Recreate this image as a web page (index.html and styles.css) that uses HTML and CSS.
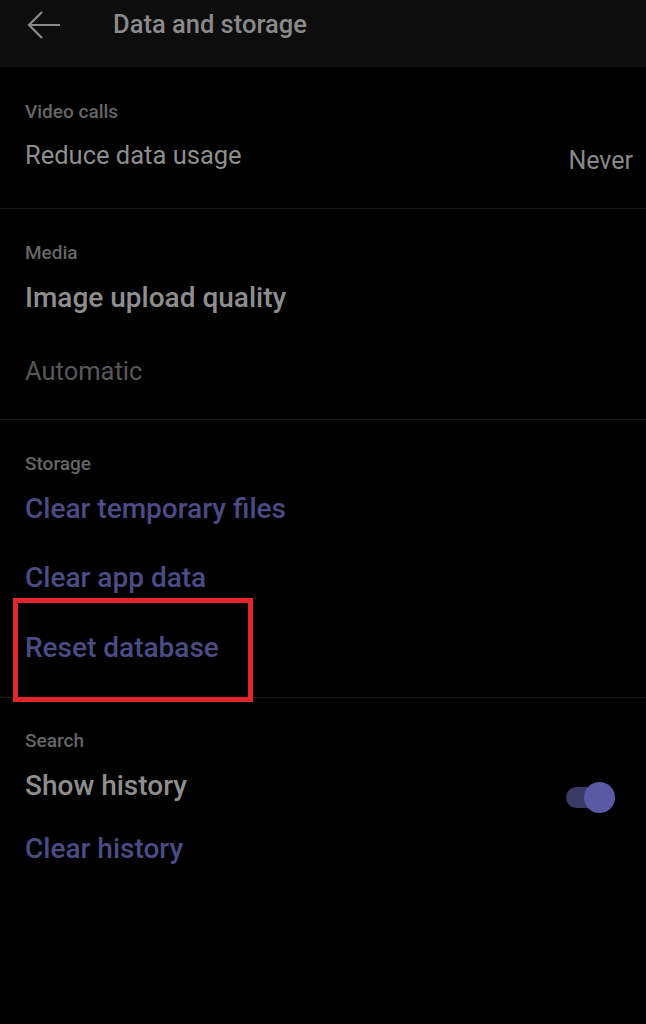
FILE: index.html
```html
<!DOCTYPE html>
<html lang="en">
<head>
  <meta charset="UTF-8" />
  <meta name="viewport" content="width=device-width, initial-scale=1.0" />
  <title>Data and storage</title>
  <link rel="stylesheet" href="styles.css">
</head>
<body>
  <header class="topbar">
    <svg class="back" width="34" height="30" viewBox="0 0 34 30">
      <path d="M33 15H2M15 2L2 15l13 13" fill="none" stroke="#8a8a8a" stroke-width="2.2"/>
    </svg>
    <h1>Data and storage</h1>
  </header>

  <section class="group video">
    <div class="label">Video calls</div>
    <div class="row">
      <span class="item">Reduce data usage</span>
      <span class="value">Never</span>
    </div>
  </section>

  <section class="group media">
    <div class="label">Media</div>
    <div class="item strong">Image upload quality</div>
    <div class="item muted">Automatic</div>
  </section>

  <section class="group storage">
    <div class="label">Storage</div>
    <div class="item link">Clear temporary files</div>
    <div class="item link">Clear app data</div>
    <div class="item link"><span class="highlight">Reset database</span></div>
  </section>

  <section class="group search">
    <div class="label">Search</div>
    <div class="row">
      <span class="item strong">Show history</span>
      <span class="toggle on"><span class="knob"></span></span>
    </div>
    <div class="item link">Clear history</div>
  </section>
</body>
</html>
```

FILE: styles.css
```css
body {
  margin: 0;
  background: #000;
  font-family: Roboto, "Liberation Sans", sans-serif;
  color: #8e8e8e;
}
.topbar {
  height: 67px;
  background: #0d0d0d;
  display: flex;
  align-items: flex-start;
  padding-left: 27px;
  box-sizing: border-box;
}
.back {
  margin-top: 10px;
}
.topbar h1 {
  margin: 8px 0 0 52px;
  font-size: 25.5px;
  line-height: 32px;
  font-weight: 500;
  color: #8a8a8a;
}
.group {
  padding: 32px 13px 32px 25px;
  border-bottom: 1px solid #1a1a1a;
}
.label {
  font-size: 19px;
  line-height: 24px;
  font-weight: 500;
  color: #666;
}
.item {
  font-size: 25.5px;
  line-height: 34px;
  display: block;
}
.row {
  display: flex;
  justify-content: space-between;
  align-items: flex-start;
  margin-top: 16px;
}
.strong {
  font-size: 28px;
  font-weight: 500;
  color: #8e8e8e;
}
.muted {
  color: #585858;
}
.link {
  font-size: 28px;
  font-weight: 500;
  color: #4b4b85;
}
.video {
  padding-top: 33px;
  padding-bottom: 30px;
}
.video .row {
  margin-top: 14px;
}
.value {
  font-size: 25px;
  line-height: 34px;
  margin-top: 6px;
  color: #888;
}
.media .strong {
  margin-top: 16px;
}
.media .muted {
  margin-top: 39px;
}
.media {
  padding-bottom: 31px;
}
.storage .link:nth-of-type(2) {
  margin-top: 16px;
}
.storage .link:nth-of-type(3) {
  margin-top: 35px;
}
.storage .link:nth-of-type(4) {
  margin-top: 36px;
}
.highlight {
  position: relative;
}
.highlight::after {
  content: "";
  position: absolute;
  left: -12px;
  top: -33px;
  width: 240px;
  height: 104px;
  border: 5px solid #e3262c;
  box-sizing: border-box;
}
.search {
  padding-top: 31px;
  border-bottom: none;
}
.search .row {
  padding-right: 18px;
}
.search .link {
  margin-top: 24px;
}
.toggle {
  position: relative;
  width: 49px;
  height: 21px;
  border-radius: 11px;
  background: #3b3a66;
  margin-top: 18px;
}
.knob {
  position: absolute;
  right: 0;
  top: -5px;
  width: 31px;
  height: 31px;
  border-radius: 50%;
  background: #5a59a6;
}
```
